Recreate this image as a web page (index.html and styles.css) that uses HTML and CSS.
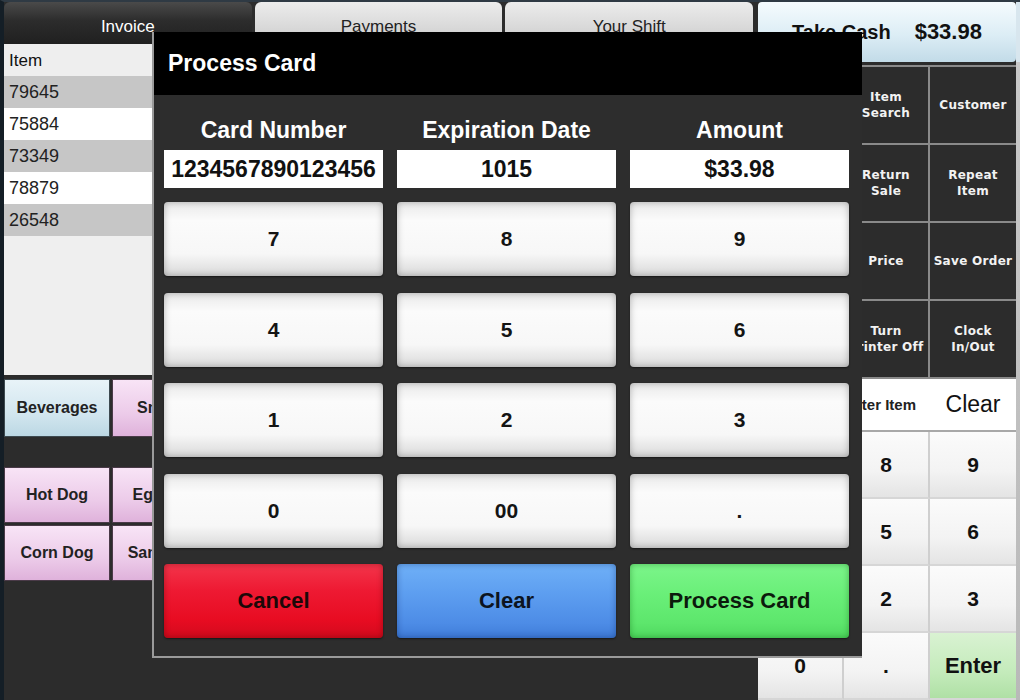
FILE: index.html
```html
<!DOCTYPE html>
<html lang="en">
<head>
  <meta charset="UTF-8">
  <meta name="viewport" content="width=device-width, initial-scale=1.0">
  <title>Register - Process Card</title>
  <link rel="stylesheet" href="styles.css">
</head>
<body>
  <div class="screen">
    <div class="main">
      <div class="tabs">
        <div class="tab active">Invoice</div>
        <div class="tab">Payments</div>
        <div class="tab">Your Shift</div>
      </div>

      <div class="invoice">
        <div class="invoice-head">Item</div>
        <div class="row shaded">79645</div>
        <div class="row">75884</div>
        <div class="row shaded">73349</div>
        <div class="row">78879</div>
        <div class="row shaded">26548</div>
      </div>

      <div class="categories">
        <div class="cat drinks">Beverages</div>
        <div class="cat pink">Snacks</div>
      </div>

      <div class="menu-items">
        <div class="cat pink">Hot Dog</div>
        <div class="cat pink">Egg Roll</div>
        <div class="cat pink">Corn Dog</div>
        <div class="cat pink">Sandwich</div>
      </div>
    </div>

    <div class="side">
      <div class="take-cash">
        <span>Take Cash</span>
        <span class="amount">$33.98</span>
      </div>

      <div class="functions">
        <div class="fn"></div>
        <div class="fn">Item<br>Search</div>
        <div class="fn">Customer</div>
        <div class="fn"></div>
        <div class="fn">Return<br>Sale</div>
        <div class="fn">Repeat<br>Item</div>
        <div class="fn"></div>
        <div class="fn">Price</div>
        <div class="fn">Save Order</div>
        <div class="fn"></div>
        <div class="fn">Turn<br>Printer Off</div>
        <div class="fn">Clock<br>In/Out</div>
      </div>

      <div class="entry">
        <div class="entry-label">Enter Item</div>
        <div class="entry-clear">Clear</div>
      </div>

      <div class="numpad">
        <div class="num"></div>
        <div class="num">8</div>
        <div class="num">9</div>
        <div class="num"></div>
        <div class="num">5</div>
        <div class="num">6</div>
        <div class="num"></div>
        <div class="num">2</div>
        <div class="num">3</div>
        <div class="num">0</div>
        <div class="num">.</div>
        <div class="num enter">Enter</div>
      </div>
    </div>

    <div class="edge"></div>

    <!-- card payment dialog -->
    <div class="dialog">
      <div class="dialog-title">Process Card</div>
      <div class="dialog-body">
        <div class="fields">
          <div class="field-label">Card Number</div>
          <div class="field-label">Expiration Date</div>
          <div class="field-label">Amount</div>
          <div class="field-input">1234567890123456</div>
          <div class="field-input">1015</div>
          <div class="field-input">$33.98</div>
        </div>
        <div class="keys">
          <button class="key">7</button>
          <button class="key">8</button>
          <button class="key">9</button>
          <button class="key">4</button>
          <button class="key">5</button>
          <button class="key">6</button>
          <button class="key">1</button>
          <button class="key">2</button>
          <button class="key">3</button>
          <button class="key">0</button>
          <button class="key">00</button>
          <button class="key">.</button>
          <button class="key cancel">Cancel</button>
          <button class="key clear">Clear</button>
          <button class="key process">Process Card</button>
        </div>
      </div>
    </div>
  </div>
</body>
</html>
```

FILE: styles.css
```css
body {
  margin: 0;
  background: #2b2b2b;
  font-family: "Liberation Sans", Arial, sans-serif;
}

.screen {
  position: relative;
  width: 1020px;
  height: 700px;
  box-sizing: border-box;
  display: flex;
  background: #2c2c2c;
  border-top: 2px solid #2f3a44;
  border-left: 4px solid #141e26;
  overflow: hidden;
}

/* left side: tabs, invoice list, menu */
.main {
  width: 749px;
  display: flex;
  flex-direction: column;
}

.tabs {
  display: flex;
  gap: 3px;
  height: 42px;
}

.tab {
  flex: 1;
  box-sizing: border-box;
  padding-top: 8px;
  border-radius: 6px 6px 0 0;
  display: flex;
  align-items: center;
  justify-content: center;
  font-size: 17px;
  color: #222;
  background: linear-gradient(#ececec, #d9d9d9 60%, #c9c9c9);
}

.tab.active {
  color: #fff;
  background: linear-gradient(#4a4a4a, #2c2c2c 45%, #202020);
}

.invoice {
  width: 360px;
  height: 331px;
  background: #efefef;
}

.invoice-head {
  height: 32px;
  line-height: 33px;
  padding-left: 5px;
  font-size: 17px;
  color: #111;
  background: #eeeeee;
}

.row {
  height: 32px;
  line-height: 33px;
  padding-left: 5px;
  font-size: 18px;
  color: #222;
  background: #fff;
}

.row.shaded {
  background: #c6c6c6;
}

.categories {
  display: flex;
  gap: 2px;
  margin-top: 4px;
  height: 58px;
}

.menu-items {
  display: grid;
  grid-template-columns: repeat(2, 106px);
  grid-auto-rows: 56px;
  gap: 2px;
  margin-top: 30px;
}

.cat {
  width: 106px;
  box-sizing: border-box;
  border: 1px solid #4a3a48;
  display: flex;
  align-items: center;
  justify-content: center;
  font-weight: bold;
  font-size: 16px;
  color: #222;
}

.cat.drinks {
  border-color: #3d4a50;
  background: linear-gradient(#e8f3f8, #d2e6ef 60%, #bcd8e4);
}

.cat.pink {
  background: linear-gradient(#f8e4f6, #eccbe9 60%, #dfb2db);
}

/* right side: totals, function keys, item keypad */
.side {
  width: 258px;
  margin-left: 5px;
  display: flex;
  flex-direction: column;
}

.take-cash {
  height: 60px;
  flex-shrink: 0;
  border-radius: 4px;
  display: flex;
  align-items: center;
  justify-content: center;
  gap: 24px;
  font-weight: bold;
  font-size: 20px;
  color: #111;
  background: linear-gradient(#f5fbfe, #dcedf5 55%, #c2dbe8);
}

.take-cash .amount {
  font-size: 22px;
}

.functions {
  display: grid;
  grid-template-columns: repeat(3, 1fr);
  margin-top: 3px;
  border-top: 2px solid #8a8a8a;
}

.fn {
  height: 76px;
  border-right: 2px solid #8a8a8a;
  border-bottom: 2px solid #8a8a8a;
  display: flex;
  align-items: center;
  justify-content: center;
  text-align: center;
  font-family: "DejaVu Sans", Verdana, sans-serif;
  font-weight: bold;
  font-size: 12px;
  line-height: 16px;
  letter-spacing: 0.3px;
  color: #f2f2f2;
}

.fn:nth-child(3n) {
  border-right: none;
}

.entry {
  display: grid;
  grid-template-columns: 2fr 1fr;
  height: 51px;
  flex-shrink: 0;
  background: #fff;
  border-bottom: 2px solid #a8a8a8;
}

.entry-label {
  display: flex;
  align-items: center;
  justify-content: flex-end;
  padding-right: 14px;
  font-size: 15px;
  font-weight: bold;
  color: #222;
}

.entry-clear {
  display: flex;
  align-items: center;
  justify-content: center;
  font-size: 23px;
  color: #111;
}

.numpad {
  display: grid;
  grid-template-columns: repeat(3, 1fr);
  grid-auto-rows: 67px;
}

.num {
  display: flex;
  align-items: center;
  justify-content: center;
  border-right: 2px solid #cfcfcf;
  border-bottom: 2px solid #d6d6d6;
  font-weight: bold;
  font-size: 21px;
  color: #111;
  background: linear-gradient(#fbfbfb, #f3f3f3 60%, #e4e4e4);
}

.num:nth-child(3n) {
  border-right: none;
}

.num.enter {
  font-size: 22px;
  background: linear-gradient(#d9f2d2, #c4ebbb 60%, #afe0a5);
}

.edge {
  width: 4px;
  background: linear-gradient(#d8e6ee 0, #d8e6ee 60px, #c9c9c9 60px, #b9b9b9);
}

/* card payment dialog */
.dialog {
  position: absolute;
  left: 148px;
  top: 30px;
  width: 710px;
  height: 626px;
  box-sizing: border-box;
  border-left: 2px solid #9a9a9a;
  border-bottom: 2px solid #9a9a9a;
  background: #2d2d2d;
}

.dialog-title {
  height: 63px;
  display: flex;
  align-items: center;
  padding-left: 14px;
  background: #000;
  color: #fff;
  font-weight: bold;
  font-size: 23px;
}

.dialog-body {
  padding: 23px 13px 0 10px;
}

.fields {
  display: grid;
  grid-template-columns: repeat(3, 219px);
  column-gap: 14px;
}

.field-label {
  height: 24px;
  line-height: 24px;
  margin-bottom: 8px;
  text-align: center;
  color: #fff;
  font-weight: bold;
  font-size: 23px;
}

.field-input {
  height: 38px;
  display: flex;
  align-items: center;
  justify-content: center;
  background: #fff;
  color: #111;
  font-weight: bold;
  font-size: 23px;
}

.keys {
  display: grid;
  grid-template-columns: repeat(3, 219px);
  grid-auto-rows: 74px;
  column-gap: 14px;
  row-gap: 16.5px;
  margin-top: 14px;
}

.key {
  border: none;
  border-radius: 4px;
  padding: 0;
  font-family: inherit;
  font-weight: bold;
  font-size: 21px;
  color: #141414;
  background: linear-gradient(#e9e9e9, #fbfbfb 25%, #f7f7f7 70%, #d9d9d9);
  box-shadow: inset 0 0 7px rgba(0, 0, 0, 0.28), 0 1px 2px rgba(0, 0, 0, 0.5);
}

.key.cancel {
  font-size: 22px;
  color: #1c0808;
  background: linear-gradient(#f3354b, #ee1a33 35%, #e80c22 75%, #d20a1d);
  box-shadow: inset 0 0 6px rgba(90, 0, 0, 0.45), 0 1px 2px rgba(0, 0, 0, 0.5);
}

.key.clear {
  font-size: 22px;
  color: #0c1420;
  background: linear-gradient(#6fb0f7, #5d9ef0 40%, #4d8ce6 80%, #3f7cd8);
  box-shadow: inset 0 0 6px rgba(0, 30, 90, 0.4), 0 1px 2px rgba(0, 0, 0, 0.5);
}

.key.process {
  font-size: 22px;
  color: #0c1a0c;
  background: linear-gradient(#7cf58a, #6aef79 40%, #5de66c 80%, #4fd85f);
  box-shadow: inset 0 0 6px rgba(0, 80, 0, 0.4), 0 1px 2px rgba(0, 0, 0, 0.5);
}
```
